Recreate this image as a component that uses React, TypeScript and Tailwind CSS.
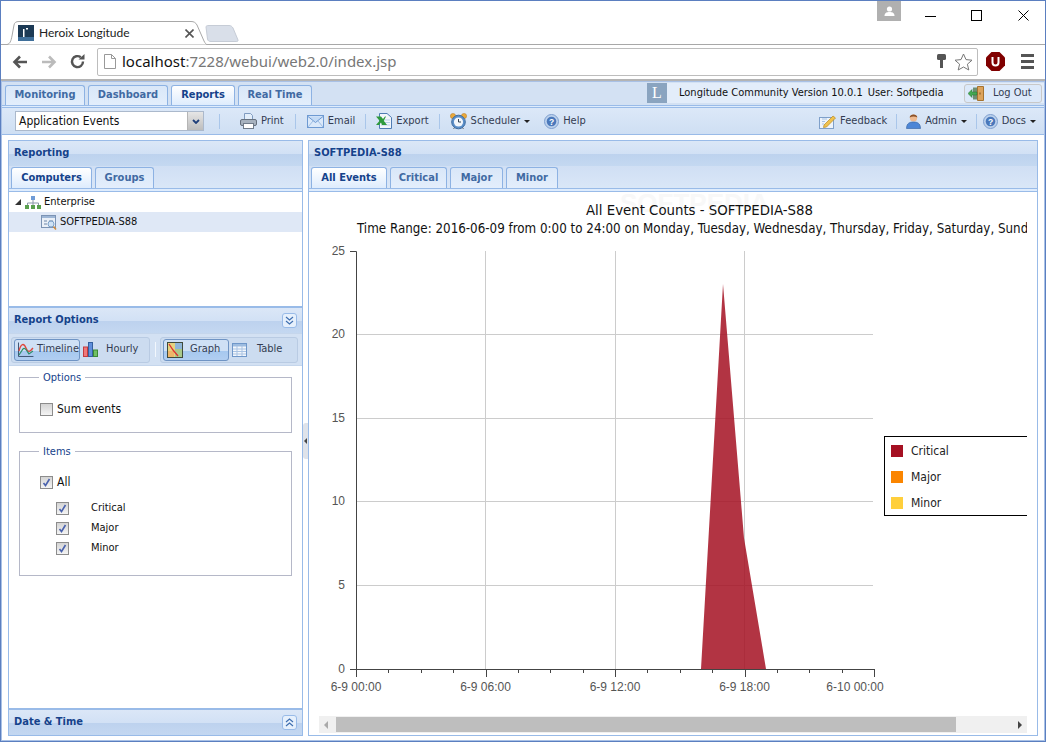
import React from 'react';

const Chevron = ({ up }: { up?: boolean }) => (
  <div className="ml-auto mr-[5px] w-[15px] h-[15px] rounded-[3px] border border-[#99bbe8] bg-[#e6f0fc] flex items-center justify-center">
    <svg width="9" height="9" viewBox="0 0 9 9" fill="none" stroke="#3f6fb0" strokeWidth="1.2">
      {up ? <path d="M1 4 L4.5 1 L8 4 M1 8 L4.5 5 L8 8" /> : <path d="M1 1 L4.5 4 L8 1 M1 5 L4.5 8 L8 5" />}
    </svg>
  </div>
);

const PanelHeader = ({ title, right, className }: { title: string; right?: React.ReactNode; className?: string }) => (
  <div className={`flex items-center pl-[5px] bg-[linear-gradient(#dbe7f7_0%,#d2e1f5_50%,#bdd2ee_52%,#c4d8f1_100%)] ${className}`}>
    <span className="font-bold text-[11px] text-[#15428b]">{title}</span>
    {right}
  </div>
);

const ExtTab = ({ label, active, w }: { label: string; active?: boolean; w: string }) => (
  <div
    className={`${w} h-full flex items-center justify-center rounded-t-[3px] border border-b-0 border-[#8db2e3] font-bold text-[11px] ${
      active ? 'bg-[linear-gradient(#ffffff,#deecfd)] text-[#15428b]' : 'bg-[linear-gradient(#d9e7f8,#e3eefc)] text-[#416aa3]'
    }`}
  >
    {label}
  </div>
);

const Caret = () => <span className="w-0 h-0 border-x-[3px] border-x-transparent border-t-[3px] border-t-[#222]" />;

const PrintIcon = () => (
  <svg width="17" height="16" viewBox="0 0 17 16">
    <path d="M4.5 .5 H10.5 L12.5 2.5 V7 H4.5 Z" fill="#e3eefa" stroke="#7f9bc0" />
    <rect x=".5" y="6.5" width="16" height="6" rx="1.5" fill="#a7b2bf" stroke="#66717f" />
    <rect x="3.5" y="10.5" width="10" height="5" fill="#fff" stroke="#6f7b8a" />
  </svg>
);
const MailIcon = () => (
  <svg width="17" height="13" viewBox="0 0 17 13">
    <rect x=".5" y=".5" width="16" height="12" fill="#dbe9fa" stroke="#6e9ad2" />
    <path d="M1 1.5 L8.5 7.5 L16 1.5" fill="#c3daf5" stroke="#6e9ad2" />
    <path d="M1 12 L6 6 M16 12 L11 6" fill="none" stroke="#9dbde4" />
  </svg>
);
const ExcelIcon = () => (
  <svg width="16" height="16" viewBox="0 0 16 16">
    <path d="M3.5 .5 H11 L15.5 4.5 V15.5 H3.5 Z" fill="#f2f6fb" stroke="#4f7cb3" />
    <path d="M5 7 H14 M5 9.5 H14 M5 12 H14" stroke="#b8cfe8" />
    <path d="M0 3.5 H5 L7 6 L9 3.5 H10 L7.8 7.8 L11 12 H6 L5 9.5 L3 12 H0 L3.6 7.8 Z" fill="#2f9a3c" />
  </svg>
);
const ClockIcon = () => (
  <svg width="17" height="17" viewBox="0 0 17 17">
    <circle cx="3" cy="3" r="2.6" fill="#e9a83a" stroke="#b8781f" strokeWidth=".5" />
    <circle cx="14" cy="3" r="2.6" fill="#e9a83a" stroke="#b8781f" strokeWidth=".5" />
    <path d="M3.5 16 L5 14 M13.5 16 L12 14" stroke="#666" />
    <circle cx="8.5" cy="9" r="6.8" fill="#5b8fc9" stroke="#3f6c9f" />
    <circle cx="8.5" cy="9" r="4.6" fill="#f2f6fb" />
    <path d="M8.5 6 V9 H11" fill="none" stroke="#345" />
  </svg>
);
const HelpIcon = () => (
  <svg width="15" height="15" viewBox="0 0 15 15">
    <circle cx="7.5" cy="7.5" r="7" fill="#bcd1ec" stroke="#7e9fcf" />
    <circle cx="7.5" cy="7.5" r="4.8" fill="#4a78bb" />
    <text x="7.5" y="10.6" textAnchor="middle" fontSize="8.5" fontWeight="700" fill="#fff" fontFamily="Liberation Sans, sans-serif">?</text>
  </svg>
);
const FeedbackIcon = () => (
  <svg width="17" height="15" viewBox="0 0 17 15">
    <rect x=".5" y="3.5" width="14" height="11" fill="#eef4fb" stroke="#7fa0ca" />
    <path d="M3 5 H8 M3 7.5 H6 M3 10 H5" stroke="#a9c3e3" />
    <path d="M5 11 L14 2 L16.5 4 L7.5 13 L4.5 13.5 Z" fill="#f0c24f" stroke="#b78a24" strokeWidth=".7" />
  </svg>
);
const AdminIcon = () => (
  <svg width="15" height="16" viewBox="0 0 15 16">
    <circle cx="7.5" cy="5" r="3.6" fill="#eeb98f" />
    <path d="M3.6 4.5 C4 .5 11 .5 11.4 4.5 C9 3 6 3 3.6 4.5 Z" fill="#8a5128" />
    <path d="M.5 15.5 C.5 10 4 9 7.5 9 C11 9 14.5 10 14.5 15.5 Z" fill="#4d86d6" stroke="#31609f" strokeWidth=".6" />
  </svg>
);
const LogoutIcon = () => (
  <svg width="16" height="15" viewBox="0 0 16 15">
    <rect x="5" y="1.5" width="5" height="12" fill="#6e8f73" />
    <path d="M9.5 .5 L15.5 .5 V14.5 H9.5 Z" fill="#dca35c" stroke="#a6732f" />
    <rect x="11.5" y="6.5" width="1" height="2" fill="#7a4f1b" />
    <path d="M0 7.5 L4 3.5 V6 H9 V9 H4 V11.5 Z" fill="#45a852" stroke="#2a6f33" strokeWidth=".5" />
  </svg>
);
const TreeNetIcon = () => (
  <svg width="16" height="13" viewBox="0 0 16 13">
    <rect x="6" y="0" width="4" height="4" fill="#6f9bd6" />
    <path d="M8 4 V7 M2.5 9 V7 H13.5 V9 M8 7 V9" fill="none" stroke="#8b98a8" />
    <rect x="0" y="9" width="4" height="4" fill="#5aa04e" />
    <rect x="6" y="9" width="4" height="4" fill="#5aa04e" />
    <rect x="12" y="9" width="4" height="4" fill="#5aa04e" />
  </svg>
);
const HostIcon = () => (
  <svg width="16" height="15" viewBox="0 0 16 15">
    <rect x=".5" y=".5" width="14" height="12" fill="#eaf0f8" stroke="#7b93b4" />
    <rect x="1" y="1" width="13" height="2" fill="#9db6d6" />
    <path d="M3 6 H6 M3 9 H6 M8 6 H12" stroke="#6d86a8" />
    <circle cx="10" cy="9" r="3" fill="#cfe2f5" stroke="#7ba0c8" />
    <path d="M12.5 11.5 L15 14.5" stroke="#cf8a3c" strokeWidth="1.5" />
  </svg>
);
const LineChartIcon = () => (
  <svg width="16" height="15" viewBox="0 0 16 15">
    <path d="M.5 .5 V14.5 H15.5" fill="none" stroke="#3f5675" />
    <path d="M1 9 C3 1 6 1 8 6 S12 10 15 6" fill="none" stroke="#e0483f" strokeWidth="1.4" />
    <path d="M1 13 L5 7 C7 5 9 9 11 12 L15 9" fill="none" stroke="#2f8f6a" strokeWidth="1.2" />
  </svg>
);
const BarsIcon = () => (
  <svg width="16" height="15" viewBox="0 0 16 15">
    <rect x=".5" y="5" width="4" height="9.5" fill="#f0787a" stroke="#c23b3f" />
    <rect x="5.5" y="0.5" width="4" height="14" fill="#5f8fdc" stroke="#33609f" />
    <rect x="10.5" y="8" width="4" height="6.5" fill="#6fbf63" stroke="#3b8a35" />
  </svg>
);
const GraphIcon = () => (
  <svg width="16" height="16" viewBox="0 0 16 16">
    <rect x=".5" y=".5" width="15" height="15" fill="#e6d37e" stroke="#3f4a3c" />
    <rect x="8" y="1" width="7" height="6" fill="#8fb6d8" />
    <rect x="8" y="7" width="7" height="8" fill="#a9c98a" />
    <rect x="1" y="9" width="6" height="6" fill="#eeb56a" />
    <path d="M2 2 L6 8 L11 14" fill="none" stroke="#d33" strokeWidth="1.3" />
  </svg>
);
const TableIcon = () => (
  <svg width="15" height="14" viewBox="0 0 15 14">
    <rect x=".5" y=".5" width="14" height="13" fill="#f3f7fc" stroke="#6f97c9" />
    <rect x="1" y="1" width="13" height="2.5" fill="#9dbce0" />
    <path d="M1 6 H14 M1 8.5 H14 M1 11 H14 M5 3 V13 M10 3 V13" stroke="#a9c3e3" />
  </svg>
);

const Check = ({ checked }: { checked?: boolean }) => (
  <div className="w-[13px] h-[13px] border border-[#8c8c8c] bg-[linear-gradient(#d4d4d4,#f4f4f4)] flex items-center justify-center shrink-0">
    {checked && (
      <svg width="9" height="9" viewBox="0 0 9 9" fill="none" stroke="#4a62ad" strokeWidth="1.6">
        <path d="M1.5 5 L3.5 7.5 L7.5 1" />
      </svg>
    )}
  </div>
);

const ToolBtn = ({ icon, label, caret }: { icon: React.ReactNode; label: string; caret?: boolean }) => (
  <div className="flex items-center gap-[4px] text-[#333c52]">
    {icon}
    <span className="text-[11px]">{label}</span>
    {caret && <Caret />}
  </div>
);

const OptBtn = ({ icon, label, active, w, gap }: { icon: React.ReactNode; label: string; active?: boolean; w: string; gap: string }) => (
  <div
    className={`${w} h-[22px] flex items-center pl-[3px] overflow-hidden whitespace-nowrap rounded-[3px] text-[11px] text-[#333c52] ${gap} ${
      active ? 'border border-[#6f94c4] bg-[linear-gradient(#cfe0f5_0%,#cfe0f5_55%,#a6c8ef_56%,#b1cef1_100%)]' : ''
    }`}
  >
    {icon}
    <span>{label}</span>
  </div>
);

const xLabels = [
  { x: 356, t: '6-9 00:00' },
  { x: 485.5, t: '6-9 06:00' },
  { x: 615, t: '6-9 12:00' },
  { x: 744.5, t: '6-9 18:00' },
  { x: 855, t: '6-10 00:00' },
];
const yLabels = [
  { y: 251, t: '25' },
  { y: 334, t: '20' },
  { y: 418, t: '15' },
  { y: 501, t: '10' },
  { y: 585, t: '5' },
  { y: 669, t: '0' },
];
const ticks = Array.from({ length: 17 }, (_, i) => 356 + i * 32.375);

const Chart = () => (
  <svg width="708" height="524" viewBox="319 192 708 524" className="block" fontFamily="'Liberation Sans', sans-serif">
    <text x="620" y="212" fontSize="26" fontWeight="700" fill="#f8f8f8">SOFTPEDIA</text>
    <text x="586" y="215" fontSize="14.8" fill="#111" fontFamily="'DejaVu Sans Condensed', 'Noto Sans', sans-serif">All Event Counts - SOFTPEDIA-S88</text>
    <text x="357" y="233" fontSize="13.25" fill="#111" fontFamily="'DejaVu Sans Condensed', 'Noto Sans', sans-serif">Time Range: 2016-06-09 from 0:00 to 24:00 on Monday, Tuesday, Wednesday, Thursday, Friday, Saturday, Sunday</text>
    {[334.5, 418.5, 501.5, 585.5].map((y) => (
      <line key={y} x1="356" x2="873" y1={y} y2={y} stroke="#cccccc" />
    ))}
    {[485.5, 615.5, 744.5].map((x) => (
      <line key={x} x1={x} x2={x} y1="251" y2="669" stroke="#cccccc" />
    ))}
    <polygon points="723,284 744,538 766,669 701,669" fill="#a51022" fillOpacity="0.85" />
    <path d="M350 251.5 H356.5 V669.5 H874.5 M350 669.5 H356.5" fill="none" stroke="#444" />
    {ticks.map((x, i) => (
      <line key={x} x1={Math.round(x) + 0.5} x2={Math.round(x) + 0.5} y1="669" y2={i % 4 === 0 ? 677 : 673} stroke="#444" />
    ))}
    {yLabels.map((l) => (
      <text key={l.t} x="345" y={l.y + 4} textAnchor="end" fontSize="12" fill="#555">{l.t}</text>
    ))}
    {xLabels.map((l) => (
      <text key={l.t} x={l.x} y="691" textAnchor="middle" fontSize="12" fill="#555">{l.t}</text>
    ))}
    <rect x="884.5" y="436.5" width="160" height="79" fill="#fff" stroke="#000" />
    <rect x="891" y="445" width="12" height="12" fill="#a51022" />
    <rect x="891" y="471" width="12" height="12" fill="#fb8500" />
    <rect x="891" y="497" width="12" height="12" fill="#ffcf3c" />
    <g fontSize="12" fill="#222" fontFamily="'DejaVu Sans Condensed', 'Noto Sans', sans-serif">
      <text x="911" y="455">Critical</text>
      <text x="911" y="481">Major</text>
      <text x="911" y="507">Minor</text>
    </g>
  </svg>
);

export default function App() {
  return (
    <div className="w-[1046px] h-[742px] overflow-hidden flex flex-col bg-white border border-[#5b7fc0] font-['DejaVu_Sans_Condensed','Noto_Sans',sans-serif] text-[#111]">
      {/* Browser tab strip */}
      <div className="h-[43px] flex shrink-0">
        <div className="relative mt-[20px] ml-[4px] w-[202px] h-[23px] flex items-center">
          <svg className="absolute inset-0" width="202" height="24" viewBox="0 0 202 24">
            <path d="M0 23.5 H2 C5 23 6 20 7 15 L9 4 C9.5 1.5 11 .5 14 .5 H186 C189 .5 190.5 1.5 192 4 L199 20 C200 22 201 23.5 202 23.5" fill="#fff" stroke="#a8a8a8" />
          </svg>
          <svg className="relative ml-[13px]" width="16" height="16" viewBox="0 0 16 16">
            <rect width="16" height="16" fill="#1c3a55" />
            <rect x="0" y="12" width="16" height="4" fill="#3f6f9a" />
            <rect x="5" y="4" width="1.5" height="8" fill="#fff" />
            <rect x="8" y="3" width="2" height="1.5" fill="#fff" />
          </svg>
          <span className="relative ml-[5px] text-[12px] font-['Lato',sans-serif] text-[#222]">Heroix Longitude</span>
          <svg className="absolute left-[180px] top-[8px]" width="9" height="9" viewBox="0 0 9 9" stroke="#555" strokeWidth="1.6">
            <path d="M.5 .5 L8.5 8.5 M8.5 .5 L.5 8.5" />
          </svg>
        </div>
        <svg className="mt-[24px] -ml-[2px]" width="34" height="18" viewBox="0 0 34 18">
          <path d="M1 2 C1 .8 2 .5 4 .5 H24 C26 .5 27 1.5 28 3 L33 15 C33.5 16.5 32 16.5 31 16.5 H6 C4 16.5 3 16 2.5 14 Z" fill="#d9dfe9" stroke="#c6ccd6" />
        </svg>
        <div className="ml-auto flex items-start">
          <div className="w-[24px] h-[20px] bg-[#b0b0b0] flex items-center justify-center">
            <svg width="11" height="11" viewBox="0 0 11 11" fill="#fff">
              <circle cx="5.5" cy="3" r="2.6" />
              <path d="M.5 10 C.5 6.5 3 6 5.5 6 S10.5 6.5 10.5 10 Z" />
            </svg>
          </div>
          <div className="w-[144px] pl-[24px] flex items-center h-[29px] gap-[35px]">
            <div className="w-[11px] h-px bg-black mt-[1px]" />
            <div className="w-[11px] h-[11px] border border-black" />
            <svg className="ml-[1px]" width="11" height="11" viewBox="0 0 11 11" stroke="#000" strokeWidth="1">
              <path d="M.5 .5 L10.5 10.5 M10.5 .5 L.5 10.5" />
            </svg>
          </div>
        </div>
      </div>

      {/* Browser toolbar */}
      <div className="h-[37px] shrink-0 flex items-center border-t border-[#a8a8a8] border-b-2 border-b-[#b4b4b4] bg-white pb-[1px]">
        <svg className="ml-[11px]" width="16" height="14" viewBox="0 0 16 14" fill="none" stroke="#555" strokeWidth="2.6">
          <path d="M15 7 H3 M8 1.5 L2.5 7 L8 12.5" />
        </svg>
        <svg className="ml-[13px]" width="16" height="14" viewBox="0 0 16 14" fill="none" stroke="#bbb" strokeWidth="2.6">
          <path d="M1 7 H13 M8 1.5 L13.5 7 L8 12.5" />
        </svg>
        <svg className="ml-[13px]" width="15" height="15" viewBox="0 0 15 15" fill="none" stroke="#555" strokeWidth="2.4">
          <path d="M13 7.5 A5.5 5.5 0 1 1 10.8 3.2" />
          <path d="M8.5 5.5 H14.5 V0 Z" fill="#555" stroke="none" />
        </svg>
        <div className="ml-[12px] w-[881px] h-[28px] rounded-[2px] border border-[#bdbdbd] flex items-center">
          <svg className="ml-[6px]" width="12" height="15" viewBox="0 0 12 15" fill="#fff" stroke="#999">
            <path d="M.5 .5 H7.5 L11.5 4.5 V14.5 H.5 Z M7.5 .5 V4.5 H11.5" />
          </svg>
          <span className="ml-[6px] text-[15px] font-['Noto_Sans',sans-serif]">
            <span className="text-[#111]">localhost</span>
            <span className="text-[#777]">:7228/webui/web2.0/index.jsp</span>
          </span>
          <svg className="ml-auto" width="9" height="15" viewBox="0 0 9 15" fill="#555">
            <rect x="0" y="0" width="9" height="6" rx="1.5" />
            <rect x="3" y="5" width="3" height="9" />
          </svg>
          <svg className="ml-[8px] mr-[4px]" width="19" height="18" viewBox="0 0 19 18" fill="#fff" stroke="#777">
            <path d="M9.5 1 L12 6.6 L18 7.2 L13.4 11.2 L14.8 17 L9.5 14 L4.2 17 L5.6 11.2 L1 7.2 L7 6.6 Z" />
          </svg>
        </div>
        <svg className="ml-[8px]" width="19" height="19" viewBox="0 0 19 19">
          <path d="M5.5 0 H13.5 L19 5.5 V13.5 L13.5 19 H5.5 L0 13.5 V5.5 Z" fill="#800000" />
          <path d="M6.5 5 V10.5 C6.5 14.5 12.5 14.5 12.5 10.5 V5" fill="none" stroke="#fff" strokeWidth="2" />
        </svg>
        <div className="ml-[16px] w-[13px] flex flex-col gap-[3px]">
          <div className="h-[3px] bg-[#555]" />
          <div className="h-[3px] bg-[#555]" />
          <div className="h-[3px] bg-[#555]" />
        </div>
      </div>

      {/* Application */}
      <div className="flex-1 min-h-0 flex flex-col border border-[#a9c1e6]">
        <div className="h-[24px] shrink-0 flex items-end pl-[3px] gap-[3px] border-b border-[#99bbe8] bg-[#d3e1f3]">
          <div className="h-[20px] flex gap-[3px]">
            <ExtTab label="Monitoring" w="w-[80px]" />
            <ExtTab label="Dashboard" w="w-[80px]" />
            <ExtTab label="Reports" w="w-[64px]" active />
            <ExtTab label="Real Time" w="w-[74px]" />
          </div>
          <div className="ml-auto self-start flex items-center h-[22px]">
            <div className="w-[20px] h-[20px] bg-[#8aa4c0] flex items-center justify-center text-white text-[16px] font-['Liberation_Serif',serif]">L</div>
            <div className="h-[20px] w-[377px] flex items-center bg-[#e3edfa] pl-[12px] text-[11px] text-[#111]">
              <span>Longitude Community Version 10.0.1</span>
              <span className="ml-[5px]">User: Softpedia</span>
              <div className="ml-auto mr-[2px] w-[78px] h-[19px] flex items-center pl-[3px] gap-[9px] rounded-[3px] border border-[#c8c8c8] bg-[#dce9fa] text-[#333c52]">
                <LogoutIcon />
                <span>Log Out</span>
              </div>
            </div>
          </div>
        </div>
        <div className="h-[2px] shrink-0 bg-[#deecfd] border-b border-[#99bbe8]" />
        <div className="h-[27px] shrink-0 flex items-center pl-[13px] pr-[8px] border-b border-[#99bbe8] bg-[linear-gradient(#dce8f8,#cfdff3)]">
          <div className="w-[189px] h-[20px] flex border border-[#abb9cc] bg-white">
            <span className="flex-1 pl-[3px] text-[12px] leading-[18px] text-[#111]">Application Events</span>
            <div className="w-[16px] bg-[linear-gradient(#e6e6e6,#bdbdbd)] border-l border-[#b5b5b5] flex items-center justify-center">
              <svg width="8" height="5" viewBox="0 0 8 5" fill="none" stroke="#1f3f7a" strokeWidth="1.8">
                <path d="M1 1 L4 4 L7 1" />
              </svg>
            </div>
          </div>
          <div className="w-px h-[15px] bg-[#a9c6ea] ml-[15px] mr-[20px]" />
          <ToolBtn icon={<PrintIcon />} label="Print" />
          <div className="w-px h-[15px] bg-[#a9c6ea] mx-[11px]" />
          <ToolBtn icon={<MailIcon />} label="Email" />
          <div className="w-px h-[15px] bg-[#a9c6ea] mx-[10px]" />
          <ToolBtn icon={<ExcelIcon />} label="Export" />
          <div className="w-px h-[15px] bg-[#a9c6ea] ml-[10px] mr-[10px]" />
          <ToolBtn icon={<ClockIcon />} label="Scheduler" caret />
          <div className="w-[14px]" />
          <ToolBtn icon={<HelpIcon />} label="Help" />
          <div className="ml-auto flex items-center">
            <ToolBtn icon={<FeedbackIcon />} label="Feedback" />
            <div className="w-px h-[15px] bg-[#a9c6ea] mx-[9px]" />
            <ToolBtn icon={<AdminIcon />} label="Admin" caret />
            <div className="w-px h-[15px] bg-[#a9c6ea] ml-[9px] mr-[6px]" />
            <ToolBtn icon={<HelpIcon />} label="Docs" caret />
          </div>
        </div>

        <div className="relative flex-1 min-h-0 flex pl-[6px] pt-[5px] pb-[4px] gap-[5px]">
          {/* Left column */}
          <div className="w-[295px] flex flex-col border border-[#99bbe8]">
            <PanelHeader title="Reporting" className="h-[25px] shrink-0" />
            <div className="h-[26px] shrink-0 flex flex-col bg-[linear-gradient(#d0dff4,#dbe8f8)]">
              <div className="h-[21px] mt-px flex gap-[3px] pl-[2px]">
                <ExtTab label="Computers" w="w-[81px]" active />
                <ExtTab label="Groups" w="w-[59px]" />
              </div>
              <div className="flex-1 bg-[#deecfd] border-y border-[#99bbe8]" />
            </div>
            <div className="h-[114px] shrink-0 text-[11px]">
              <div className="h-[20px] flex items-center">
                <span className="ml-[6px] w-0 h-0 border-l-[6px] border-l-transparent border-b-[6px] border-b-[#333]" />
                <span className="ml-[4px]"><TreeNetIcon /></span>
                <span className="ml-[3px]">Enterprise</span>
              </div>
              <div className="h-[20px] flex items-center bg-[#dfe8f6] pl-[32px]">
                <HostIcon />
                <span className="ml-[3px]">SOFTPEDIA-S88</span>
              </div>
            </div>
            <PanelHeader
              title="Report Options"
              right={<Chevron />}
              className="h-[27px] shrink-0 border-t-2 border-[#99bbe8]"
            />
            <div className="h-[33px] shrink-0 flex items-center pl-[2px] border-y border-[#c5d6ec] bg-[#d3e1f3]">
              <div className="w-[139px] h-[26px] flex items-center pl-[2px] rounded-[3px] border border-[#b9cbe3] bg-[#ccdcf0]">
                <OptBtn icon={<LineChartIcon />} label="Timeline" active w="w-[66px]" gap="gap-[3px]" />
                <OptBtn icon={<BarsIcon />} label="Hourly" w="w-[68px]" gap="gap-[7px]" />
              </div>
              <div className="w-px h-[15px] bg-[#f2f7fd] ml-[5px] mr-[4px]" />
              <div className="w-[138px] h-[26px] flex items-center pl-[2px] rounded-[3px] border border-[#b9cbe3] bg-[#ccdcf0]">
                <OptBtn icon={<GraphIcon />} label="Graph" active w="w-[66px]" gap="gap-[7px]" />
                <OptBtn icon={<TableIcon />} label="Table" w="w-[68px]" gap="gap-[10px]" />
              </div>
            </div>
            <div className="flex-1 min-h-0 pl-[10px] pr-[10px] pt-[5px]">
              <fieldset className="h-[62px] border border-[#b5b8c8] pl-[20px]">
                <legend className="-ml-px px-[4px] text-[11px] leading-[13px] text-[#15428b]">Options</legend>
                <div className="flex items-center gap-[4px] mt-[16px] text-[12px]">
                  <Check />
                  <span>Sum events</span>
                </div>
              </fieldset>
              <fieldset className="mt-[12px] h-[131px] border border-[#b5b8c8] pl-[20px]">
                <legend className="-ml-px px-[4px] text-[11px] leading-[13px] text-[#15428b]">Items</legend>
                <div className="flex items-center gap-[4px] mt-[15px] text-[12px]">
                  <Check checked />
                  <span>All</span>
                </div>
                <div className="mt-[11px] ml-[16px] flex flex-col gap-[7px] text-[11px]">
                  {['Critical', 'Major', 'Minor'].map((t) => (
                    <div key={t} className="flex items-center gap-[22px] h-[13px]">
                      <Check checked />
                      <span>{t}</span>
                    </div>
                  ))}
                </div>
              </fieldset>
            </div>
            <PanelHeader
              title="Date & Time"
              right={<Chevron up />}
              className="h-[27px] shrink-0 border-t-2 border-[#99bbe8]"
            />
          </div>

          {/* Splitter handle */}
          <div className="absolute left-[301px] top-[288px] w-[5px] h-[36px] rounded-l-[3px] bg-[#dfe3ea] flex items-center">
            <span className="w-0 h-0 border-y-[3px] border-y-transparent border-r-[3px] border-r-[#444] ml-px" />
          </div>

          {/* Right column */}
          <div className="w-[730px] flex flex-col border border-[#99bbe8]">
            <PanelHeader title="SOFTPEDIA-S88" className="h-[25px] shrink-0" />
            <div className="h-[26px] shrink-0 flex flex-col bg-[linear-gradient(#d0dff4,#dbe8f8)]">
              <div className="h-[21px] mt-px flex gap-[3px] pl-[2px]">
                <ExtTab label="All Events" w="w-[76px]" active />
                <ExtTab label="Critical" w="w-[57px]" />
                <ExtTab label="Major" w="w-[53px]" />
                <ExtTab label="Minor" w="w-[52px]" />
              </div>
              <div className="flex-1 bg-[#deecfd] border-y border-[#99bbe8]" />
            </div>
            <div className="flex-1 min-h-0 pl-[10px] overflow-hidden">
              <Chart />
              <div className="w-[708px] h-[17px] flex items-center bg-[#f0f0f0]">
                <span className="ml-[5px] w-0 h-0 border-y-[4px] border-y-transparent border-r-[4px] border-r-[#aaa]" />
                <div className="ml-[8px] w-[620px] h-[15px] bg-[#bebebe]" />
                <span className="ml-auto mr-[5px] w-0 h-0 border-y-[4px] border-y-transparent border-l-[4px] border-l-[#444]" />
              </div>
            </div>
          </div>
        </div>
      </div>
    </div>
  );
}
